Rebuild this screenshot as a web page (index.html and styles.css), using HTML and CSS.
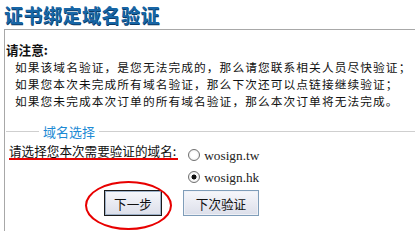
FILE: index.html
```html
<!DOCTYPE html>
<html lang="zh-CN">
<head>
    <meta charset="UTF-8">
    <title>证书绑定域名验证</title>
    <link rel="stylesheet" href="styles.css">
</head>
<body>
    <h1 class="title">证书绑定域名验证</h1>

    <div class="panel">
        <p class="notice-head">请注意:</p>
        <p class="notice">如果该域名验证，是您无法完成的，那么请您联系相关人员尽快验证；</p>
        <p class="notice">如果您本次未完成所有域名验证，那么下次还可以点链接继续验证；</p>
        <p class="notice">如果您未完成本次订单的所有域名验证，那么本次订单将无法完成。</p>

        <fieldset class="domain-box">
            <legend>域名选择</legend>
            <div class="domain-row">
                <span class="domain-label">请选择您本次需要验证的域名:</span>
                <div class="domain-list">
                    <label class="domain-item"><input type="radio" name="domain" value="wosign.tw"> wosign.tw</label>
                    <label class="domain-item"><input type="radio" name="domain" value="wosign.hk" checked> wosign.hk</label>
                </div>
            </div>
            <div class="actions">
                <span class="mark"><button class="btn btn-focus">下一步</button></span>
                <button class="btn btn-next">下次验证</button>
            </div>
        </fieldset>
    </div>
</body>
</html>
```

FILE: styles.css
```css
/* Basic Styling */
body {
    margin: 0;
    padding: 0;
    font-family: "Noto Sans CJK SC", "Liberation Sans", sans-serif;
    font-size: 12.6px;
    line-height: 17px;
    color: #111;
    background-color: #fff;
}

.title {
    margin: 0 0 2px 0;
    padding: 3px 0 0 4px;
    font-size: 19px;
    line-height: 24px;
    letter-spacing: 0.5px;
    font-weight: bold;
    color: #1766a6;
    text-shadow: 0.5px 0.5px 0 #0d3a66;
}

.panel {
    margin-left: 4px;
    padding: 11px 0 0 1px;
    border-left: 1px solid #a8a8a8;
    border-top: 1px solid #a8a8a8;
    height: 200px;
}

.notice-head {
    margin: 0;
    font-weight: bold;
}

.notice {
    margin: 0;
    padding-left: 9px;
    font-size: 11.7px;
    letter-spacing: 1.1px;
}

/* Domain select box */
.domain-box {
    margin: 14px 0 0 0;
    padding: 0 0 0 3px;
    border: none;
    border-top: 1px solid #cfcfcf;
    min-inline-size: 0;
}

.domain-box legend {
    margin-left: 30px;
    padding: 0 4px;
    color: #1c8ad4;
    font-size: 13px;
}

.domain-row {
    display: flex;
    align-items: flex-start;
    padding-top: 4px;
}

.domain-label {
    display: inline-block;
    line-height: 14px;
    padding: 0 2px 0 0;
    border-bottom: 2px solid #e60000;
    margin-right: 10px;
}

.domain-list {
    display: flex;
    flex-direction: column;
}

.domain-item {
    display: flex;
    align-items: center;
    height: 22px;
    font-family: "Liberation Serif", serif;
    font-size: 13.3px;
    color: #222;
}

.domain-item input {
    appearance: none;
    width: 12px;
    height: 12px;
    margin: 0 4px 0 0;
    border: 1px solid #707070;
    border-radius: 50%;
    background: radial-gradient(circle, #fff 40%, #e2e2e2 100%);
}

.domain-item input:checked {
    background: radial-gradient(circle, #111 0, #111 2.2px, #fff 2.8px, #e2e2e2 100%);
}

/* Buttons */
.actions {
    display: flex;
    gap: 21px;
    padding: 2px 0 0 95px;
}

.mark {
    position: relative;
    display: inline-block;
}

/* red hand-drawn circle around the button */
.mark::after {
    content: "";
    position: absolute;
    left: -19px;
    top: -9px;
    width: 83px;
    height: 45px;
    border: 2px solid #e80000;
    border-radius: 50%;
}

.btn {
    height: 26px;
    padding: 0;
    font-family: "Noto Sans CJK SC", sans-serif;
    font-size: 12.6px;
    color: #111;
    background: linear-gradient(#f6f7fb, #dcdfea);
    border: 1px solid #7f9db9;
    box-shadow: inset 0 0 0 1px #eef0f6;
}

.btn-focus {
    width: 58px;
    border-color: #1a1a1a;
    box-shadow: inset 0 0 0 1px #9cb0c8;
}

.btn-next {
    width: 76px;
}
```
